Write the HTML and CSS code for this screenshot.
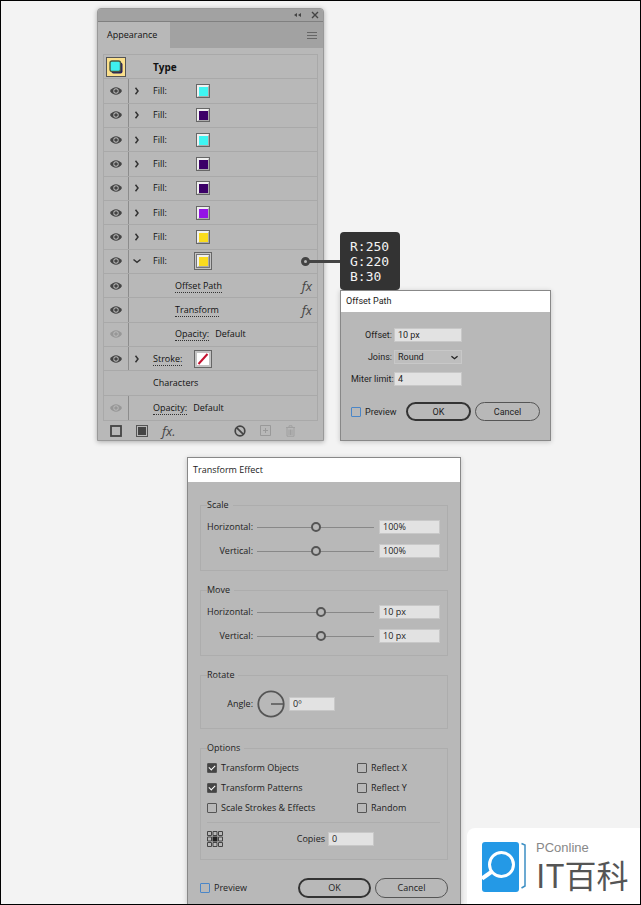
FILE: index.html
```html
<!DOCTYPE html>
<html lang="en">
<head>
  <meta charset="UTF-8" />
  <title>Appearance</title>
  <link rel="stylesheet" href="styles.css">
</head>
<body>
  <svg class="defs" aria-hidden="true">
    <symbol id="eye" viewBox="0 0 12 8">
      <path d="M0 4C3 -1 9 -1 12 4C9 9 3 9 0 4Z" fill="currentColor" />
      <circle cx="6" cy="4" r="2.7" fill="#b8b8b8" />
      <circle cx="6" cy="4" r="1.8" fill="currentColor" />
    </symbol>
    <symbol id="arrow" viewBox="0 0 8 8">
      <path d="M2.5 0.8L5 4L2.5 7.2" fill="none" stroke="currentColor" stroke-width="1.5" />
    </symbol>
    <symbol id="arrow-down" viewBox="0 0 8 8">
      <path d="M0.5 2.5L4 5.3L7.5 2.5" fill="none" stroke="currentColor" stroke-width="1.5" />
    </symbol>
  </svg>

  <main class="stage">
    <div class="top">
      <section class="panel">
        <div class="panel-bar">
          <button aria-label="Collapse"><svg width="7" height="6" viewBox="0 0 7 6"><path d="M3 1V5L0 3ZM7 1V5L4 3Z" fill="#444" /></svg></button>
          <button aria-label="Close"><svg width="8" height="8" viewBox="0 0 8 8"><path d="M1 1L7 7M7 1L1 7" stroke="#444" stroke-width="1.4" /></svg></button>
        </div>
        <div class="tabs">
          <div class="tab">Appearance</div>
          <button aria-label="Menu"><svg width="10" height="9" viewBox="0 0 10 9"><path d="M0 1.5H10M0 4.5H10M0 7.5H10" stroke="#666" /></svg></button>
        </div>

        <div class="rows" id="rows">
          <div class="row head">
            <span class="thumb"><svg width="14" height="14" viewBox="0 0 14 14"><rect x="2.5" y="2.5" width="11" height="11" rx="2" fill="#28205a" /><rect x="1" y="1" width="10.5" height="10.5" rx="2" fill="#3ef0ee" stroke="#4a5840" stroke-width="1.4" /></svg></span>
            <b class="name">Type</b>
          </div>
        </div>

        <div class="panel-tools">
          <button aria-label="Add stroke"><svg width="12" height="12" viewBox="0 0 12 12"><rect x="1" y="1" width="10" height="10" fill="none" stroke="#444" stroke-width="1.8" /></svg></button>
          <button aria-label="Add fill"><svg width="12" height="12" viewBox="0 0 12 12"><rect x="0.5" y="0.5" width="11" height="11" fill="none" stroke="#555" /><rect x="2" y="2" width="8" height="8" fill="#444" /></svg></button>
          <button class="fx">fx.</button>
          <button class="push" aria-label="Clear"><svg width="12" height="12" viewBox="0 0 12 12"><circle cx="6" cy="6" r="4.8" fill="none" stroke="#444" stroke-width="1.7" /><path d="M2.6 2.6L9.4 9.4" stroke="#444" stroke-width="1.7" /></svg></button>
          <button aria-label="Duplicate"><svg width="11" height="11" viewBox="0 0 11 11"><path d="M0.5 0.5H10.5V10.5H0.5ZM5.5 3V8M3 5.5H8" fill="none" stroke="#999" /></svg></button>
          <button aria-label="Delete"><svg width="11" height="12" viewBox="0 0 11 12"><path d="M1 2.5H10M4 2V0.8H7V2M2 3V11.2H9V3M4 4.5V10M5.5 4.5V10M7 4.5V10" fill="none" stroke="#a0a0a0" /></svg></button>
        </div>
      </section>

      <div class="side">
        <div class="rgb">R:250<br>G:220<br>B:30</div>
        <form class="dialog small">
          <h2>Offset Path</h2>
          <div class="dialog-body">
            <div class="line">
              <label for="offset">Offset:</label>
              <input type="text" id="offset" value="10 px">
            </div>
            <div class="line">
              <label for="joins">Joins:</label>
              <div class="select">
                <select id="joins"><option>Round</option><option>Miter</option><option>Bevel</option></select>
                <svg width="7" height="7"><use href="#arrow-down" /></svg>
              </div>
            </div>
            <div class="line">
              <label for="miter">Miter limit:</label>
              <input type="text" id="miter" value="4">
            </div>
            <div class="actions">
              <label class="check blue"><input type="checkbox">Preview</label>
              <button type="button" class="ok">OK</button>
              <button type="button">Cancel</button>
            </div>
          </div>
        </form>
      </div>
    </div>

    <form class="dialog large">
      <h2>Transform Effect</h2>
      <div class="dialog-body">
        <fieldset>
          <legend>Scale</legend>
          <div class="line">
            <label for="scaleH">Horizontal:</label>
            <input type="range" id="scaleH" value="50">
            <input type="text" value="100%" aria-label="Horizontal scale">
          </div>
          <div class="line">
            <label for="scaleV">Vertical:</label>
            <input type="range" id="scaleV" value="50">
            <input type="text" value="100%" aria-label="Vertical scale">
          </div>
        </fieldset>

        <fieldset>
          <legend>Move</legend>
          <div class="line">
            <label for="moveH">Horizontal:</label>
            <input type="range" id="moveH" value="55">
            <input type="text" value="10 px" aria-label="Horizontal move">
          </div>
          <div class="line">
            <label for="moveV">Vertical:</label>
            <input type="range" id="moveV" value="55">
            <input type="text" value="10 px" aria-label="Vertical move">
          </div>
        </fieldset>

        <fieldset class="rotate">
          <legend>Rotate</legend>
          <div class="line angle">
            <label for="angle">Angle:</label>
            <svg width="28" height="28" viewBox="0 0 28 28"><circle cx="14" cy="14" r="12.7" fill="none" stroke="#555" stroke-width="1.8" /><path d="M14 14H26" stroke="#555" stroke-width="1.5" /></svg>
            <input type="text" id="angle" value="0º">
          </div>
        </fieldset>

        <fieldset class="options">
          <legend>Options</legend>
          <div class="checks">
            <label class="check"><input type="checkbox" checked>Transform Objects</label>
            <label class="check"><input type="checkbox">Reflect X</label>
            <label class="check"><input type="checkbox" checked>Transform Patterns</label>
            <label class="check"><input type="checkbox">Reflect Y</label>
            <label class="check"><input type="checkbox">Scale Strokes &amp; Effects</label>
            <label class="check"><input type="checkbox">Random</label>
          </div>
          <div class="copies">
            <svg width="16" height="16" viewBox="0 0 16 16" fill="none" stroke="#444">
              <path d="M0.5 0.5H4.5V4.5H0.5ZM6 0.5H10V4.5H6ZM11.5 0.5H15.5V4.5H11.5ZM0.5 6H4.5V10H0.5ZM11.5 6H15.5V10H11.5ZM0.5 11.5H4.5V15.5H0.5ZM6 11.5H10V15.5H6ZM11.5 11.5H15.5V15.5H11.5Z" />
              <rect x="6" y="6" width="4" height="4" fill="#222" stroke="#222" />
            </svg>
            <label for="copies">Copies</label>
            <input type="text" id="copies" value="0">
          </div>
        </fieldset>

        <div class="actions">
          <label class="check blue"><input type="checkbox">Preview</label>
          <button type="button" class="ok">OK</button>
          <button type="button">Cancel</button>
        </div>
      </div>
    </form>

    <div class="brand">
      <svg width="46" height="50" viewBox="0 0 46 50">
        <rect width="37" height="50" rx="3" fill="#2499e6" />
        <path d="M0 36.500L10 29.500" stroke="#fff" stroke-width="4" />
        <circle cx="19.500" cy="22.500" r="12" fill="#2499e6" stroke="#fff" stroke-width="3" />
        <path d="M39.500 1.500L43 3V44L39.500 46" fill="none" stroke="#3c8fc4" stroke-width="1.500" />
      </svg>
      <div>
        <div class="brand-top">PConline</div>
        <div class="brand-name" lang="zh-Hans">IT百科</div>
      </div>
    </div>
  </main>

  <script>
    const items = [
      { name: "Fill:", color: "#3ff5f2", arrow: "arrow" },
      { name: "Fill:", color: "#3c0068", arrow: "arrow" },
      { name: "Fill:", color: "#3ff5f2", arrow: "arrow" },
      { name: "Fill:", color: "#3c0068", arrow: "arrow" },
      { name: "Fill:", color: "#3c0068", arrow: "arrow" },
      { name: "Fill:", color: "#9412e6", arrow: "arrow" },
      { name: "Fill:", color: "#fadc1e", arrow: "arrow" },
      { name: "Fill:", color: "#fadc1e", arrow: "arrow-down", active: true },
      { name: "Offset Path", link: true, sub: true, fx: true },
      { name: "Transform", link: true, sub: true, fx: true },
      { name: "Opacity:", link: true, sub: true, value: "Default", dim: true },
      { name: "Stroke:", link: true, none: true, arrow: "arrow", active: true },
      { name: "Characters", plain: true },
      { name: "Opacity:", link: true, value: "Default", dim: true }
    ];

    const rows = document.getElementById('rows');
    items.forEach(item => {
      const row = document.createElement('div');
      row.className = 'row' + (item.sub ? ' sub' : '') + (item.plain ? ' plain' : '');
      let swatch = '';
      if (item.color) {
        swatch = `<span class="swatch${item.active ? ' active' : ''}"><i style="background:${item.color}"></i></span>`;
      } else if (item.none) {
        swatch = `<span class="swatch active"><svg width="12" height="12"><rect width="12" height="12" fill="#fff" /><path d="M1.500 11L10.500 1" stroke="#c4122f" stroke-width="2" /></svg></span>`;
      }
      row.innerHTML = `
        <span class="eye${item.dim ? ' dim' : ''}">${item.plain ? '' : '<svg width="12" height="8"><use href="#eye" /></svg>'}</span>
        <span class="arrow">${item.arrow ? `<svg width="8" height="8"><use href="#${item.arrow}" /></svg>` : ''}</span>
        <span class="name">${item.link ? `<a href="#rows">${item.name}</a>` : item.name}${item.value ? `<span class="value">${item.value}</span>` : ''}</span>
        ${swatch}
        ${item.fx ? '<span class="fx">fx</span>' : ''}
      `;
      rows.appendChild(row);
    });
  </script>
</body>
</html>
```
FILE: styles.css
```css
*, *::before, *::after {
  box-sizing: border-box;
}

body {
  margin: 0;
  background-color: #f3f3f3;
  color: #222;
  font-family: "Open Sans", "Noto Sans", sans-serif;
  font-size: 9px;
  line-height: 14px;
}

button, input, select {
  font: inherit;
  color: inherit;
  margin: 0;
  padding: 0;
}

button {
  background: none;
  border: none;
  cursor: pointer;
}

svg {
  display: block;
}

.defs {
  position: absolute;
  width: 0;
  height: 0;
}

.stage {
  position: relative;
  min-height: 100vh;
  border: 1px solid #000;
  padding: 7px 0 0 7px;
  display: flex;
  flex-direction: column;
  align-items: center;
}

.top {
  display: flex;
  align-items: flex-end;
  gap: 16px;
}

/* appearance panel */
.panel {
  width: 227px;
  background-color: #b8b8b8;
  border: 1px solid #999;
  border-radius: 4px 4px 0 0;
  box-shadow: 0 1px 5px rgba(0, 0, 0, 0.3);
  color: #111;
}

.panel-bar {
  display: flex;
  justify-content: flex-end;
  align-items: center;
  gap: 10px;
  height: 12px;
  padding-right: 4px;
  background-color: #a2a2a2;
  border-radius: 4px 4px 0 0;
}

.tabs {
  display: flex;
  justify-content: space-between;
  align-items: center;
  height: 27px;
  padding-right: 6px;
  background-color: #a2a2a2;
  border-top: 1px solid #808080;
}

.tab {
  align-self: stretch;
  width: 72px;
  padding-left: 9px;
  background-color: #b8b8b8;
  line-height: 26px;
}

.rows {
  display: grid;
  grid-auto-rows: 1fr;
  height: 367px;
  margin: 6px 5px 0;
  border: 1px solid #a9a9a9;
}

.row {
  display: flex;
  align-items: center;
  border-bottom: 1px solid #a9a9a9;
}

.row:last-child {
  border-bottom: none;
}

.thumb {
  display: flex;
  align-items: center;
  justify-content: center;
  width: 20px;
  height: 20px;
  margin: 0 27px 0 2px;
  background-color: #fbe08c;
  border: 1px solid #555;
}

.head b {
  font-size: 10px;
}

.eye {
  display: flex;
  align-items: center;
  justify-content: center;
  align-self: stretch;
  width: 25px;
  border-right: 1px solid #8c8c8c;
  color: #444;
}

.eye.dim {
  color: #979797;
}

.plain .eye {
  border-color: transparent;
}

.arrow {
  width: 24px;
  padding-left: 4px;
  color: #333;
}

.row .name {
  width: 43px;
  white-space: nowrap;
}

.sub .arrow {
  width: 46px;
}

.name a {
  color: inherit;
  text-decoration: none;
  border-bottom: 1px dotted #333;
}

.value {
  margin-left: 6px;
}

.swatch {
  display: flex;
  align-items: center;
  justify-content: center;
  width: 14px;
  height: 14px;
  border: 1px solid #666;
}

.swatch i {
  width: 12px;
  height: 12px;
  border: 1px solid;
  border-width: 2px 1px 1px 2px;
  border-color: #f0f0f0 #aaa #aaa #f0f0f0;
}

.swatch.active {
  width: 18px;
  height: 18px;
  margin-left: -2px;
  background-color: #c4c4c4;
}

.swatch.active i {
  outline: 1px solid #777;
}

.fx {
  font-size: 13px;
  font-style: italic;
  color: #444;
}

.row .fx {
  margin-left: auto;
  padding-right: 5px;
}

.panel-tools {
  display: flex;
  align-items: center;
  gap: 14px;
  height: 19px;
  padding: 0 27px 0 12px;
}

.push {
  margin-left: auto;
}

/* colour callout and offset dialog */
.rgb {
  position: relative;
  width: 60px;
  padding: 7px 0 6px 10px;
  background-color: #333;
  border-radius: 4px;
  color: #f3f3f3;
  font-family: "DejaVu Sans Mono", monospace;
  font-size: 13px;
  line-height: 15px;
}

.rgb::before {
  content: "";
  position: absolute;
  top: 28px;
  left: -32px;
  width: 32px;
  height: 3px;
  background-color: #444;
}

.rgb::after {
  content: "";
  position: absolute;
  top: 25px;
  left: -39px;
  width: 9px;
  height: 9px;
  border: 3px solid #444;
  border-radius: 50%;
}

.dialog {
  background-color: #b8b8b8;
  border: 1px solid #888;
  box-shadow: 0 1px 5px rgba(0, 0, 0, 0.2);
}

.dialog h2 {
  margin: 0;
  padding-left: 5px;
  background-color: #fff;
  font-size: 9px;
  font-weight: normal;
  line-height: 21px;
}

.small {
  width: 211px;
  font-family: Roboto, sans-serif;
}

.small .dialog-body {
  padding: 16px 10px 19px;
}

.line {
  display: flex;
  align-items: center;
  height: 14px;
}

.line + .line {
  margin-top: 8px;
}

.line > label {
  width: 41px;
  margin-right: 2px;
  text-align: right;
  white-space: nowrap;
}

input[type="text"], .select {
  height: 14px;
  background-color: #e2e2e2;
  border: 1px solid #c8c8c8;
  padding: 0 3px;
}

.small input[type="text"], .small .select {
  width: 68px;
}

.select {
  display: flex;
  align-items: center;
  background-color: #bebebe;
}

select {
  flex: 1;
  appearance: none;
  background: none;
  border: none;
}

.actions {
  display: flex;
  align-items: center;
  gap: 4px;
  margin-top: 16px;
}

.actions .check {
  margin-right: auto;
}

.actions button {
  width: 65px;
  height: 19px;
  border: 1px solid #555;
  border-radius: 10px;
}

.actions .ok {
  border: 2px solid #333;
}

.check {
  display: flex;
  align-items: center;
  gap: 4px;
  white-space: nowrap;
}

.check input {
  appearance: none;
  width: 10px;
  height: 10px;
  border: 1px solid #555;
  border-radius: 1px;
}

.check input:checked {
  background-color: #444;
}

.check input:checked::before {
  content: "";
  display: block;
  width: 6px;
  height: 4px;
  margin: 1px;
  border: solid #fff;
  border-width: 0 0 1px 1px;
  transform: rotate(-45deg);
}

.check.blue input {
  border-color: #4a86c8;
}

/* transform dialog */
.large {
  flex: 1;
  width: 274px;
  margin-top: 16px;
  border-bottom: none;
}

.large h2 {
  line-height: 24px;
}

.large .dialog-body {
  padding: 16px 12px 5px;
}

fieldset {
  min-width: 0;
  margin: 0 0 12px;
  padding: 8px 7px 12px 6px;
  border: 1px solid #adadad;
}

legend {
  padding: 0 4px 0 0;
}

.large .line + .line {
  margin-top: 10px;
}

.large .line > label {
  width: 46px;
  margin-right: 4px;
}

.large .line input[type="text"] {
  width: 61px;
}

input[type="range"] {
  flex: 1;
  appearance: none;
  min-width: 0;
  height: 10px;
  margin-right: 5px;
  background: linear-gradient(#888, #888) center / 100% 1px no-repeat;
}

input[type="range"]::-webkit-slider-thumb {
  appearance: none;
  box-sizing: border-box;
  width: 10px;
  height: 10px;
  background-color: #b8b8b8;
  border: 2px solid #555;
  border-radius: 50%;
}

.large .angle {
  height: 28px;
}

.angle svg {
  margin-right: 4px;
}

.large .angle input[type="text"], .copies input[type="text"] {
  width: 46px;
}

.rotate {
  padding-bottom: 10px;
}

.options {
  padding-top: 6px;
}

.checks {
  display: grid;
  grid-template-columns: 150px 1fr;
  row-gap: 6px;
  padding-bottom: 7px;
  border-bottom: 1px solid #adadad;
}

.copies {
  display: flex;
  align-items: center;
  height: 16px;
  margin-top: 8px;
}

.copies label {
  width: 102px;
  margin-right: 3px;
  text-align: right;
}

.large .actions {
  margin-top: 18px;
}

.large .actions button {
  width: 73px;
  height: 20px;
}

/* site mark in the corner */
.brand {
  position: absolute;
  right: 0;
  bottom: 0;
  display: flex;
  align-items: center;
  gap: 8px;
  width: 173px;
  height: 76px;
  padding: 2px 0 0 15px;
  background-color: #fff;
  border-top-left-radius: 8px;
  white-space: nowrap;
}

.brand-top {
  color: #888;
  font-family: "Liberation Sans", sans-serif;
  font-size: 13px;
  line-height: 14px;
}

.brand-name {
  color: #555;
  font-family: "Noto Sans CJK SC", sans-serif;
  font-size: 32px;
  line-height: 38px;
}
```
